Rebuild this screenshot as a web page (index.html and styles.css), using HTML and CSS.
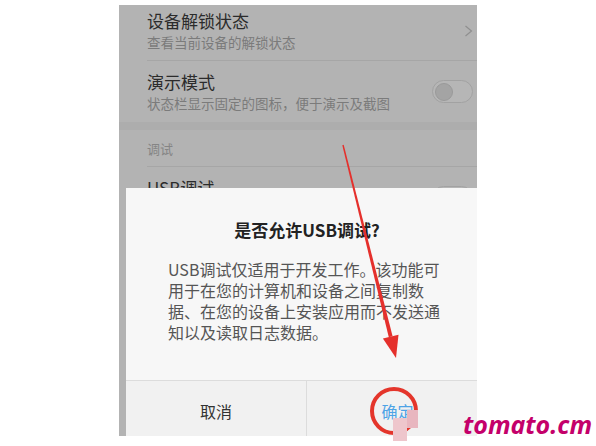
FILE: index.html
```html
<!DOCTYPE html>
<html lang="zh-CN">
<head>
    <meta charset="UTF-8">
    <meta name="viewport" content="width=device-width, initial-scale=1.0">
    <title>USB调试</title>
    <link rel="stylesheet" href="styles.css">
</head>
<body>
    <div class="page">
        <div class="screen">
            <!-- settings list behind the dim overlay -->
            <div class="row row-first">
                <div class="row-text">
                    <div class="row-title">设备解锁状态</div>
                    <div class="row-sub">查看当前设备的解锁状态</div>
                </div>
                <svg class="chevron" width="9" height="12" viewBox="0 0 9 12">
                    <polyline points="1.5,1 7.5,6 1.5,11" fill="none" stroke="#8f8f8f" stroke-width="1.2"/>
                </svg>
            </div>
            <div class="row row-switch">
                <div class="row-text">
                    <div class="row-title">演示模式</div>
                    <div class="row-sub">状态栏显示固定的图标，便于演示及截图</div>
                </div>
                <span class="toggle"><span class="knob"></span></span>
            </div>
            <div class="band"></div>
            <div class="category">调试</div>
            <div class="row row-switch">
                <div class="row-text">
                    <div class="row-title">USB调试</div>
                    <div class="row-sub">连接USB后启用调试模式</div>
                </div>
                <span class="toggle"><span class="knob"></span></span>
            </div>

            <!-- dialog -->
            <div class="dialog">
                <div class="dialog-title">是否允许USB调试?</div>
                <p class="dialog-text">USB调试仅适用于开发工作。该功能可用于在您的计算机和设备之间复制数据、在您的设备上安装应用而不发送通知以及读取日志数据。</p>
                <div class="dialog-buttons">
                    <button class="btn btn-cancel">取消</button>
                    <button class="btn btn-ok">确定</button>
                </div>
            </div>
        </div>

        <!-- annotation: arrow, circle, mosaic -->
        <svg class="marks" width="596" height="446" viewBox="0 0 596 446">
            <rect x="418" y="398" width="34" height="26" fill="#f1f1f1" opacity="0.8"/>
            <polygon points="343.7,139.8 342.3,140.2 388.8,332.2 392.6,331.2" fill="#e5302c"/>
            <polygon points="396,353 382.9,333.6 398.5,329.8" fill="#e5302c"/>
            <circle cx="394" cy="406" r="22" fill="none" stroke="#e4352b" stroke-width="4"/>
            <rect x="407" y="405" width="11" height="18" fill="#e8b6bf"/>
            <rect x="393" y="413" width="14" height="23" fill="#eec6cc"/>
        </svg>
        <div class="watermark">tomato.cm</div>
    </div>
</body>
</html>
```

FILE: styles.css
```css
* {
    margin: 0;
    padding: 0;
    box-sizing: border-box;
}
body {
    background: #fff;
    font-family: "Noto Sans CJK SC", "Noto Sans", sans-serif;
    overflow: hidden;
}
.page {
    position: relative;
    width: 596px;
    height: 446px;
}
.screen {
    position: relative;
    margin: 5px 0 0 119px;
    width: 358px;
    height: 431px;
    background: #b3b3b3;
    overflow: hidden;
}

/* list rows */
.row {
    display: flex;
    align-items: center;
    justify-content: space-between;
    margin-left: 28px;
    padding-right: 4px;
}
.row-first {
    height: 56px;
    padding-bottom: 4px;
    border-bottom: 1px solid #a6a6a6;
}
.row-switch {
    height: 61px;
}
.row-title {
    font-size: 17px;
    line-height: 22px;
    color: #2b2b2b;
}
.row-sub {
    font-size: 13.5px;
    line-height: 20px;
    color: #7b7b7b;
}
.chevron {
    display: block;
}
.toggle {
    display: flex;
    align-items: center;
    width: 41px;
    height: 23px;
    padding: 0 2px;
    border: 1px solid #a2a2a2;
    border-radius: 12px;
    background: #b6b6b6;
}
.knob {
    width: 18px;
    height: 18px;
    border-radius: 50%;
    background: #a4a4a4;
    border: 1px solid #9a9a9a;
}
.band {
    height: 8px;
    background: #adadad;
}
.category {
    margin-left: 28px;
    padding-top: 8px;
    height: 37px;
    font-size: 13px;
    line-height: 22px;
    color: #858585;
    border-bottom: 1px solid #a6a6a6;
}

/* dialog */
.dialog {
    position: absolute;
    left: 7px;
    top: 183px;
    width: 362px;
    background: #f7f7f7;
}
.dialog-title {
    padding-top: 30px;
    font-size: 17px;
    line-height: 24px;
    font-weight: bold;
    color: #222;
    text-align: center;
}
.dialog-text {
    margin-top: 17px;
    padding: 0 42px 37px;
    font-size: 16px;
    line-height: 21px;
    color: #555;
}
.dialog-buttons {
    display: grid;
    grid-template-columns: 1fr 1fr;
    border-top: 1px solid #dcdcdc;
    background: #f1f1f1;
}
.btn {
    height: 60px;
    border: none;
    background: none;
    font-family: inherit;
    font-size: 16px;
    color: #333;
}
.btn-cancel {
    border-right: 1px solid #dcdcdc;
}
.btn-ok {
    color: #4da3e6;
}

/* annotations */
.marks {
    position: absolute;
    left: 0;
    top: 0;
    pointer-events: none;
}
.watermark {
    position: absolute;
    left: 463px;
    top: 407px;
    font-family: "Open Sans", sans-serif;
    font-size: 25px;
    line-height: 25px;
    font-weight: bold;
    font-style: italic;
    color: #c4006a;
}
```
